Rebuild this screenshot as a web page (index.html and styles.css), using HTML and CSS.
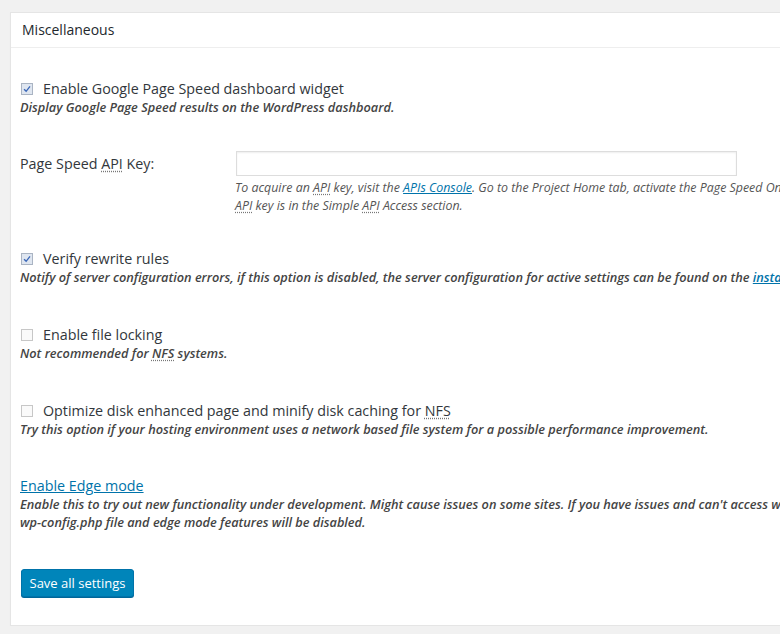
FILE: index.html
```html
<!DOCTYPE html>
<html>
<head>
<meta charset="utf-8">
<link rel="stylesheet" href="styles.css">
</head>
<body>
<div class="card">
  <div class="card-head">Miscellaneous</div>
  <div class="card-body">
    <div class="opt first">
      <label class="lbl"><span class="cb checked"><svg viewBox="0 0 12 12" width="10" height="10"><path d="M2.5 6.2 L5 8.8 L9.6 2.8" fill="none" stroke="#3a67b8" stroke-width="1.6"/></svg></span><span>Enable Google Page Speed dashboard widget</span></label>
      <div class="desc">Display Google Page Speed results on the WordPress dashboard.</div>
    </div>

    <div class="field">
      <div class="th">Page Speed <abbr>API</abbr> Key:</div>
      <div class="td">
        <input class="txt" type="text">
        <div class="note">To acquire an <abbr>API</abbr> key, visit the <a href="#">APIs Console</a>. Go to the Project Home tab, activate the Page Speed Online <abbr>API</abbr>, and accept the Terms of Service. Then go to the <abbr>API</abbr> Access tab. The<br><abbr>API</abbr> key is in the Simple <abbr>API</abbr> Access section.</div>
      </div>
    </div>

    <div class="opt after-field">
      <label class="lbl"><span class="cb checked"><svg viewBox="0 0 12 12" width="10" height="10"><path d="M2.5 6.2 L5 8.8 L9.6 2.8" fill="none" stroke="#3a67b8" stroke-width="1.6"/></svg></span><span>Verify rewrite rules</span></label>
      <div class="desc">Notify of server configuration errors, if this option is disabled, the server configuration for active settings can be found on the <a href="#">install</a> tab.</div>
    </div>

    <div class="opt">
      <label class="lbl"><span class="cb"></span><span>Enable file locking</span></label>
      <div class="desc">Not recommended for <abbr>NFS</abbr> systems.</div>
    </div>

    <div class="opt">
      <label class="lbl"><span class="cb"></span><span>Optimize disk enhanced page and minify disk caching for <abbr>NFS</abbr></span></label>
      <div class="desc">Try this option if your hosting environment uses a network based file system for a possible performance improvement.</div>
    </div>

    <div class="opt edge-opt">
      <a class="lbl edge" href="#">Enable Edge mode</a>
      <div class="desc">Enable this to try out new functionality under development. Might cause issues on some sites. If you have issues and can't access wp-admin, remove the define from your<br>wp-config.php file and edge mode features will be disabled.</div>
    </div>

    <div class="actions">
      <button class="btn" type="button">Save all settings</button>
    </div>
  </div>
</div>
</body>
</html>
```
FILE: styles.css
```css
html, body {
  margin: 0;
  padding: 0;
  overflow: hidden;
  background: #f1f1f1;
  font-family: "Open Sans", "Noto Sans", sans-serif;
  color: #444;
}
body {
  padding: 12px 0 0 10px;
  width: 1400px;
}
.card {
  background: #fff;
  border: 1px solid #e5e5e5;
  box-shadow: 0 1px 1px rgba(0,0,0,0.04);
  width: 1300px;
}
.card-head {
  height: 34px;
  line-height: 34px;
  padding-left: 11px;
  font-size: 14px;
  color: #23282d;
  border-bottom: 1px solid #eee;
}
.card-body {
  padding: 31px 0 28px 9px;
  display: flex;
  flex-direction: column;
  align-items: flex-start;
}
.opt { margin-top: 39px; white-space: nowrap; }
.opt.first { margin-top: 0; }
.opt.after-field { margin-top: 34px; }
.opt.edge-opt { margin-top: 38px; }
.lbl {
  display: flex;
  align-items: center;
  font-size: 14.3px;
  line-height: 19px;
  color: #32373c;
}
.cb {
  box-sizing: border-box;
  width: 12px;
  height: 12px;
  margin: 0 10px 0 1px;
  border: 1px solid #c7c7c7;
  background: #fafafa;
  display: inline-flex;
  align-items: center;
  justify-content: center;
  flex: none;
}
.cb.checked {
  background: #dfe6f0;
  border-color: #aab4c3;
}
.desc {
  font-size: 12.75px;
  line-height: 18px;
  font-style: italic;
  font-weight: 600;
  color: #444;
}
a { color: #0073aa; }
.edge {
  text-decoration: underline;
  color: #0073aa;
  width: fit-content;
}
abbr {
  text-decoration: underline dotted #777;
  text-underline-offset: 2px;
}
.field {
  display: flex;
  white-space: nowrap;
  margin-top: 35px;
}
.th {
  width: 215px;
  font-size: 14.3px;
  line-height: 19px;
  padding-top: 3px;
  color: #32373c;
}
.td { display: flex; flex-direction: column; }
.txt {
  box-sizing: border-box;
  width: 501px;
  height: 25px;
  margin: 0 0 3px 1px;
  border: 1px solid #ddd;
  box-shadow: inset 0 1px 2px rgba(0,0,0,0.07);
  background: #fff;
  padding: 0;
}
.note {
  font-size: 12.4px;
  line-height: 18px;
  font-style: italic;
  color: #555;
}
.actions { margin-top: 38px; }
.btn {
  box-sizing: border-box;
  height: 28px;
  width: 113px;
  padding: 0;
  margin-left: 1px;
  font-family: "Open Sans", sans-serif;
  font-size: 13px;
  color: #fff;
  background: #0085ba;
  border: 1px solid #0073aa;
  border-radius: 3px;
  box-shadow: 0 1px 0 #006799;
}
```
